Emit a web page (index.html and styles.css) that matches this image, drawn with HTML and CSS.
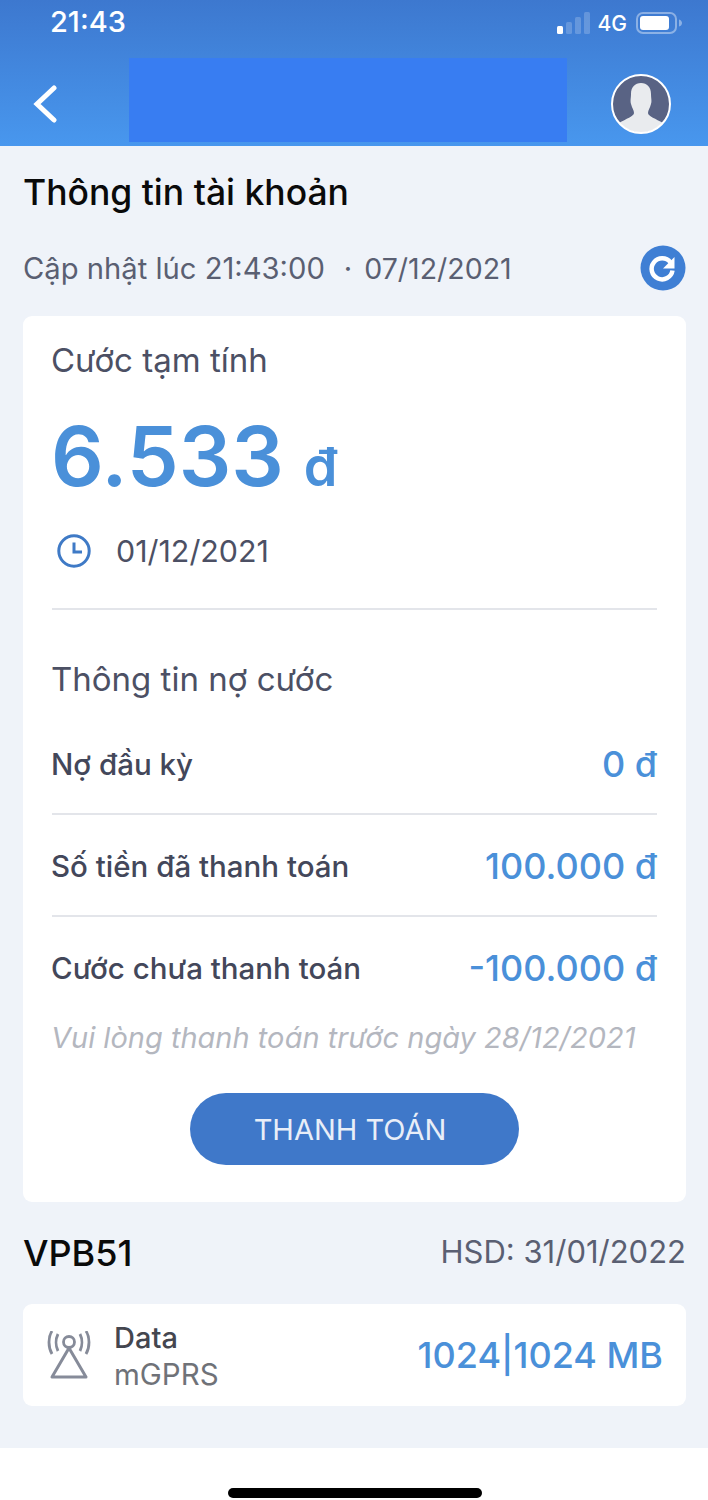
FILE: index.html
```html
<!DOCTYPE html>
<html lang="vi">
<head>
<meta charset="utf-8">
<title>Thông tin tài khoản</title>
<link rel="stylesheet" href="styles.css">
</head>
<body>
<div class="screen">
  <header class="top">
    <div class="status">
      <span class="time">21:43</span>
      <div class="status-right">
        <svg class="signal" width="33" height="22" viewBox="0 0 33 22"><rect x="0" y="14" width="6" height="8" rx="1.500" fill="#fff"/><rect x="9" y="10" width="6" height="12" rx="1.500" fill="#fff" opacity=".2"/><rect x="18" y="5" width="6" height="17" rx="1.500" fill="#fff" opacity=".2"/><rect x="27" y="0" width="6" height="22" rx="1.500" fill="#fff" opacity=".2"/></svg>
        <span class="net">4G</span>
        <svg class="battery" width="46" height="22" viewBox="0 0 46 22"><rect x="1" y="1" width="39" height="20" rx="6" fill="none" stroke="#fff" stroke-opacity=".4" stroke-width="2"/><rect x="4" y="4" width="29" height="14" rx="3" fill="#fff"/><path d="M43 7.500c2 .5 3 2 3 3.500s-1 3-3 3.500z" fill="#fff" opacity=".4"/></svg>
      </div>
    </div>
    <div class="nav">
      <svg class="back" width="26" height="38" viewBox="0 0 26 38"><path d="M22 3 5 19l17 16" fill="none" stroke="#fff" stroke-width="5" stroke-linecap="round"/></svg>
      <div class="redact"></div>
      <svg class="avatar" width="60" height="60" viewBox="0 0 60 60"><defs><clipPath id="ac"><circle cx="30" cy="30" r="28.500"/></clipPath></defs><circle cx="30" cy="30" r="28.500" fill="#596384"/><path clip-path="url(#ac)" d="M20 20c0-7 4-11 10-11s10 4 10 11c0 4 1 7 0 10-1 4-3 6-3 9 0 3 8 6 15 10v12H8V49c7-4 15-7 15-10 0-3-2-5-3-9-1-3 0-6 0-10z" fill="#e9ebee"/><circle cx="30" cy="30" r="29" fill="none" stroke="#fff" stroke-width="2"/></svg>
    </div>
  </header>

  <main class="content">
    <h1 class="title">Thông tin tài khoản</h1>
    <div class="updated">
      <span class="updated-text">Cập nhật lúc 21:43:00<span class="dot">·</span><span class="date">07/12/2021</span></span>
      <svg class="refresh" width="46" height="46" viewBox="0 0 46 46"><circle cx="23" cy="23" r="22.500" fill="#3f7fd4"/><path d="M30.500 17.500a10.500 10.500 0 1 0 2 8" fill="none" stroke="#fff" stroke-width="4.500"/><path d="M34.500 12v11.500H23z" fill="#fff"/></svg>
    </div>

    <section class="card main-card">
      <h2 class="card-head">Cước tạm tính</h2>
      <div class="amount"><span class="big">6.533</span><span class="unit">đ</span></div>
      <div class="cycle">
        <svg class="clock" width="34" height="34" viewBox="0 0 34 34"><circle cx="17" cy="17" r="15.200" fill="none" stroke="#3f7ac6" stroke-width="3"/><path d="M17 8.500V18h8" fill="none" stroke="#3f7ac6" stroke-width="3"/></svg>
        <span>01/12/2021</span>
      </div>
      <hr class="rule">
      <h2 class="card-head debt-head">Thông tin nợ cước</h2>
      <div class="row first"><span class="label">Nợ đầu kỳ</span><span class="val">0 đ</span></div>
      <div class="row lined"><span class="label">Số tiền đã thanh toán</span><span class="val">100.000 đ</span></div>
      <div class="row lined"><span class="label">Cước chưa thanh toán</span><span class="val">-100.000 đ</span></div>
      <p class="note">Vui lòng thanh toán trước ngày 28/12/2021</p>
      <div class="btn-wrap"><button class="pay">THANH TOÁN</button></div>
    </section>

    <div class="package">
      <span class="pkg-name">VPB51</span>
      <span class="pkg-exp">HSD: 31/01/2022</span>
    </div>

    <section class="card data-card">
      <svg class="antenna" width="46" height="48" viewBox="0 0 46 48"><g fill="none" stroke="#868b99" stroke-width="2.800"><circle cx="23" cy="11" r="5.500"/><path d="M23 17 6 46h34z" stroke-linejoin="round" stroke-width="3"/><path d="M12 3c-2.500 5-2.500 12 0 17M6 0C2 6 2 16 6 23"/><path d="M34 3c2.500 5 2.500 12 0 17M40 0c4 6 4 16 0 23"/></g></svg>
      <div class="data-text"><span class="data-name">Data</span><span class="data-sub">mGPRS</span></div>
      <span class="data-val">1024|1024 MB</span>
    </section>
  </main>

  <footer class="home"><span class="home-bar"></span></footer>
</div>
</body>
</html>
```
FILE: styles.css
```css
* { box-sizing: border-box; }
html, body { margin: 0; padding: 0; }
body { width: 708px; height: 1500px; overflow: hidden; font-family: Inter, "Noto Sans", sans-serif; background: #fff; }
.screen { display: flex; flex-direction: column; height: 1500px; }

.top { height: 146px; background: linear-gradient(180deg, #3d78cf 0%, #4897ee 100%); flex: none; }
.status { height: 58px; display: flex; justify-content: space-between; align-items: flex-start; padding: 7px 26px 0 50px; color: #fff; }
.time { font-size: 29px; font-weight: 500; line-height: 30px; }
.status-right { display: flex; align-items: center; height: 32px; }
.signal { margin-right: 8px; }
.net { font-size: 21px; font-weight: 500; margin-right: 9px; }
.nav { display: flex; align-items: flex-start; height: 88px; padding-left: 32px; }
.back { margin-top: 27px; flex: none; }
.redact { width: 438px; height: 84px; margin-left: 71px; background: #387df2; flex: none; }
.avatar { margin: 16px 0 0 44px; flex: none; }

.content { flex: 1; background: #eff3f9; padding: 0 22px 0 23px; }
.title { margin: 23px 0 0; font-size: 35.500px; line-height: 48px; font-weight: 500; color: #0a0a0a; }
.updated { display: flex; justify-content: space-between; align-items: center; margin: 28px 0 0; height: 46px; }
.updated-text { font-size: 29.200px; color: #5a5f72; font-weight: 400; }
.dot { margin: 0 12px 0 19px; }
.date { font-size: 28.500px; }

.card { background: #fff; border-radius: 9px; }
.main-card { margin-top: 25px; height: 886px; padding: 22px 29px 0; }
.card-head { margin: 0 0 0 -1px; font-size: 33px; line-height: 44px; font-weight: 400; color: #4c5064; }
.amount { display: flex; align-items: baseline; margin: 26px 0 0 -1px; color: #4a90d9; line-height: 96px; height: 96px; }
.big { font-size: 82.600px; font-weight: 600; }
.unit { font-size: 54px; font-weight: 600; margin-left: 20px; }
.cycle { display: flex; align-items: center; margin-top: 27px; padding-left: 5px; font-size: 30.400px; color: #4c5064; height: 40px; }
.clock { margin-right: 25px; }
.rule { border: 0; border-top: 2px solid #e3e5ea; margin: 37px 0 0; }
.debt-head { margin-top: 47px; }
.row { display: flex; justify-content: space-between; align-items: center; height: 102px; }
.first { margin-top: 14px; height: 98px; }
.lined { border-top: 2px solid #e3e5ea; padding-top: 2px; }
.label { font-size: 29.500px; font-weight: 500; color: #43475a; margin-left: -1px; }
.val { font-size: 36px; font-weight: 500; color: #4a90d9; }
.note { margin: 1px 0 0 -1px; font-size: 29px; font-style: italic; color: #b4b7bf; line-height: 40px; white-space: nowrap; }
.btn-wrap { display: flex; justify-content: center; margin-top: 35px; }
.pay { width: 329px; height: 72px; padding: 0 9px 0 0; border: 0; border-radius: 36px; background: #3f78c9; color: #e8eef8; font: 400 29px Inter, "Noto Sans", sans-serif; }

.package { display: flex; justify-content: space-between; align-items: center; margin: 27px 0 0; height: 48px; }
.pkg-name { font-size: 36px; font-weight: 500; color: #0a0a0a; }
.pkg-exp { font-size: 31px; color: #5a5f72; margin-bottom: 3px; }

.data-card { margin-top: 27px; height: 102px; display: flex; align-items: center; padding: 0 23px; }
.antenna { flex: none; }
.data-text { display: flex; flex-direction: column; margin: 3px 0 0 22px; }
.data-name { font-size: 29px; font-weight: 500; line-height: 36px; color: #44464f; }
.data-sub { font-size: 29.500px; line-height: 37px; color: #6f7278; }
.data-val { margin-left: auto; font-size: 36px; font-weight: 500; color: #4a90d9; }

.home { height: 52px; flex: none; background: #fff; display: flex; justify-content: center; padding: 40px 0 0 2px; }
.home-bar { width: 254px; height: 10px; border-radius: 5px; background: #000; }
```
